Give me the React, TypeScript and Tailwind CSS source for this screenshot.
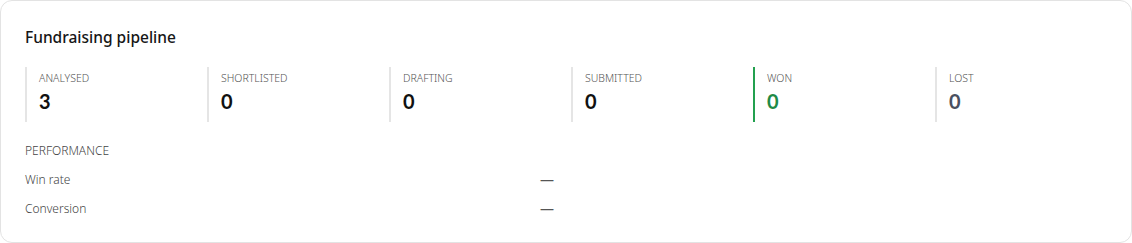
import React from "react";

const stats = [
  { label: "ANALYSED", value: "3", border: "border-[#e5e5e5]", color: "text-[#111111]" },
  { label: "SHORTLISTED", value: "0", border: "border-[#e5e5e5]", color: "text-[#111111]" },
  { label: "DRAFTING", value: "0", border: "border-[#e5e5e5]", color: "text-[#111111]" },
  { label: "SUBMITTED", value: "0", border: "border-[#e5e5e5]", color: "text-[#111111]" },
  { label: "WON", value: "0", border: "border-[#23a04f]", color: "text-[#1f8a46]" },
  { label: "LOST", value: "0", border: "border-[#e5e5e5]", color: "text-[#4a5060]" },
];

export default function App() {
  return (
    <div className="w-[1132px] h-[243px] bg-white font-['Noto_Sans',sans-serif]">
      <div className="w-[1132px] h-[243px] border border-[#e3e3e3] rounded-[12px] px-[24px] pt-[25px]">
        <h2 className="font-medium text-[15.5px] leading-[22px] text-[#161616]">
          Fundraising pipeline
        </h2>
        <div className="grid grid-cols-[repeat(6,172px)] gap-[10px] mt-[19px]">
          {stats.map((s) => (
            <div key={s.label} className={`border-l-2 ${s.border} pl-[12px] h-[55px] pt-[4px]`}>
              <div className="text-[10.5px] leading-[14px] text-[#555555] font-light">{s.label}</div>
              <div className={`font-['Lato',sans-serif] font-bold text-[20px] leading-[26px] mt-[3px] ${s.color}`}>
                {s.value}
              </div>
            </div>
          ))}
        </div>
        <div className="mt-[21px] text-[12px] leading-[16px] text-[#444444] font-light">PERFORMANCE</div>
        <div className="w-[529px] mt-[13px] flex flex-col gap-[13px]">
          <div className="flex justify-between text-[12px] leading-[16px] text-[#444444] font-light">
            <span>Win rate</span>
            <span className="text-[#555555] text-[14px] leading-[16px] font-normal">—</span>
          </div>
          <div className="flex justify-between text-[12px] leading-[16px] text-[#444444] font-light">
            <span>Conversion</span>
            <span className="text-[#555555] text-[14px] leading-[16px] font-normal">—</span>
          </div>
        </div>
      </div>
    </div>
  );
}
